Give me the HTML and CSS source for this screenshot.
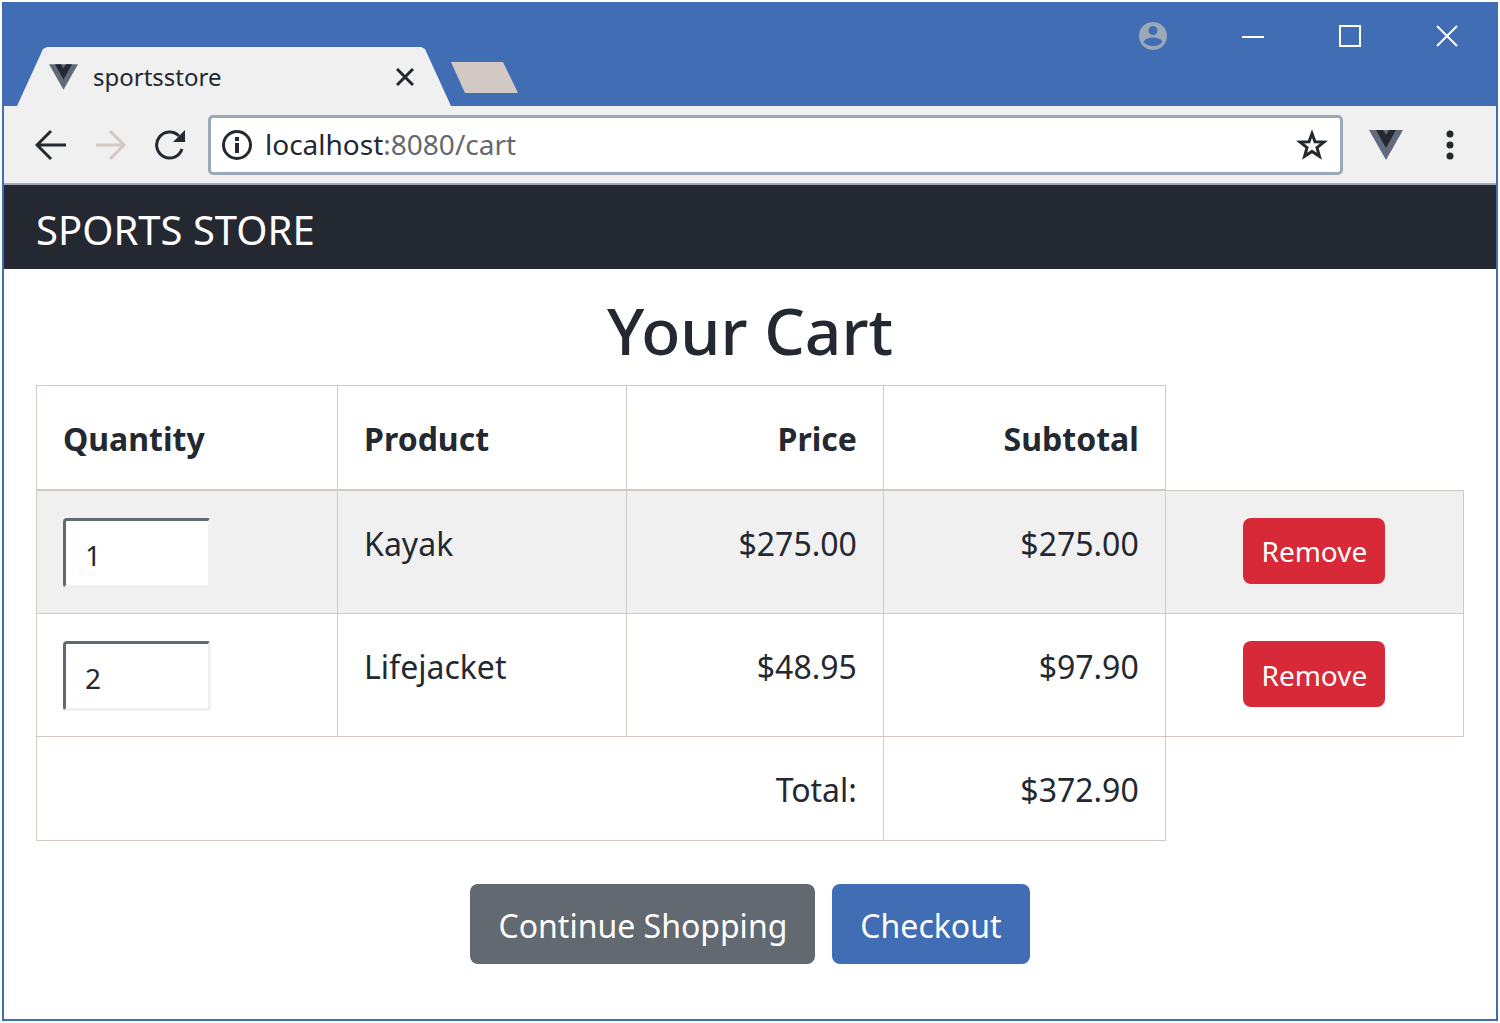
FILE: index.html
```html
<!DOCTYPE html>
<html lang="en">
<head>
<meta charset="utf-8">
<title>sportsstore</title>
<link rel="stylesheet" href="styles.css">
</head>
<body>
<div class="window">
  <header class="titlebar">
    <div class="tab">
      <svg class="tab-logo" viewBox="0 0 34 30" aria-hidden="true"><path fill="#5f6b7c" d="M0 0h34L17 30z"/><path fill="#242830" d="M7 0h7l3 5 3-5h7L17 18z"/></svg>
      <span class="tab-title">sportsstore</span>
      <button class="icon-button tab-close" aria-label="Close tab">
        <svg width="18" height="18" viewBox="0 0 18 18"><path d="M1 1l16 16M17 1L1 17" stroke="#242830" stroke-width="3" fill="none"/></svg>
      </button>
    </div>
    <button class="new-tab" aria-label="New tab"></button>
    <div class="window-controls">
      <button class="icon-button" aria-label="Profile">
        <svg width="30" height="30" viewBox="0 0 30 30"><path fill="#9aa8b8" fill-rule="evenodd" d="M15 1a14 14 0 1 0 0 28a14 14 0 1 0 0-28zM15 5a4.500 4.500 0 1 1 0 9a4.500 4.500 0 1 1 0-9zM5.500 20.500C8 17.500 11 16.500 15 16.500s7 1 9.500 4C22 24 19 25 15 25s-7-1-9.500-4.500z"/></svg>
      </button>
      <button class="icon-button" aria-label="Minimize">
        <svg width="24" height="24" viewBox="0 0 24 24"><path d="M1 13h22" stroke="#fff" stroke-width="2"/></svg>
      </button>
      <button class="icon-button" aria-label="Maximize">
        <svg width="24" height="24" viewBox="0 0 24 24"><path d="M2 2h20v20H2z" stroke="#fff" stroke-width="2" fill="none"/></svg>
      </button>
      <button class="icon-button" aria-label="Close">
        <svg width="24" height="24" viewBox="0 0 24 24"><path d="M2 2l20 20M22 2L2 22" stroke="#fff" stroke-width="2" fill="none"/></svg>
      </button>
    </div>
  </header>
  <div class="toolbar">
    <button class="icon-button" aria-label="Back">
      <svg width="32" height="32" viewBox="0 0 32 32"><path d="M31 16H3M16 2L2 16l14 14" stroke="#242830" stroke-width="3" fill="none"/></svg>
    </button>
    <button class="icon-button forward" aria-label="Forward">
      <svg width="32" height="32" viewBox="0 0 32 32"><path d="M1 16h27M15 2l14 14-14 14" stroke="#d2c8c4" stroke-width="3" fill="none"/></svg>
    </button>
    <button class="icon-button reload" aria-label="Reload">
      <svg width="32" height="32" viewBox="0 0 32 32"><path d="M28 20A13 13 0 1 1 25 7" stroke="#242830" stroke-width="3" fill="none"/><path fill="#242830" d="M31 1v12H19z"/></svg>
    </button>
    <div class="address">
      <svg width="32" height="32" viewBox="0 0 32 32" aria-hidden="true"><circle cx="16" cy="16" r="13.500" stroke="#242830" stroke-width="3" fill="none"/><path fill="#242830" d="M14 8h4v4h-4zM14 14h4v10h-4z"/></svg>
      <span class="url"><span class="host">localhost</span>:8080/cart</span>
      <button class="icon-button" aria-label="Bookmark">
        <svg width="32" height="32" viewBox="0 0 32 32"><path d="M16 4.500l3 8.200 9 .4-7 5.500 2.400 8.700L16 22.400l-7.400 4.900L11 18.600l-7-5.500 9-.4z" stroke="#242830" stroke-width="3" fill="none"/></svg>
      </button>
    </div>
    <button class="icon-button extension" aria-label="Vue devtools">
      <svg width="34" height="30" viewBox="0 0 34 30"><path fill="#5f6b7c" d="M0 0h34L17 30z"/><path fill="#242830" d="M7 0h7l3 5 3-5h7L17 18z"/></svg>
    </button>
    <button class="icon-button" aria-label="Menu">
      <svg width="8" height="30" viewBox="0 0 8 30"><g fill="#242830"><circle cx="4" cy="4" r="3.500"/><circle cx="4" cy="15" r="3.500"/><circle cx="4" cy="26" r="3.500"/></g></svg>
    </button>
  </div>
  <nav class="navbar"><a class="brand" href="#">SPORTS STORE</a></nav>
  <main class="content">
    <h1 class="heading">Your Cart</h1>
    <table class="cart">
      <colgroup><col class="col-quantity"><col class="col-product"><col class="col-price"><col class="col-subtotal"><col></colgroup>
      <thead>
        <tr><th>Quantity</th><th>Product</th><th class="number">Price</th><th class="number">Subtotal</th></tr>
      </thead>
      <tbody>
        <tr class="striped">
          <td><input class="quantity" type="text" value="1" aria-label="Kayak quantity"></td>
          <td>Kayak</td><td class="number">$275.00</td><td class="number">$275.00</td>
          <td class="action"><button class="button remove">Remove</button></td>
        </tr>
        <tr>
          <td><input class="quantity" type="text" value="2" aria-label="Lifejacket quantity"></td>
          <td>Lifejacket</td><td class="number">$48.95</td><td class="number">$97.90</td>
          <td class="action"><button class="button remove">Remove</button></td>
        </tr>
      </tbody>
      <tfoot>
        <tr><td class="number" colspan="3">Total:</td><td class="number">$372.90</td></tr>
      </tfoot>
    </table>
    <div class="actions">
      <button class="button secondary">Continue Shopping</button>
      <button class="button primary">Checkout</button>
    </div>
  </main>
</div>
</body>
</html>
```
FILE: styles.css
```css
* { box-sizing: border-box; }

body {
  margin: 0;
  padding: 2px;
  background: #fff;
  color: #242830;
  font: 32px/51px "Noto Sans", "Open Sans", sans-serif;
}

button, input { font: inherit; color: inherit; }

.window {
  min-height: calc(100vh - 4px);
  border: 2px solid #416db4;
  background: #fff;
}

.icon-button {
  display: flex;
  padding: 0;
  border: 0;
  background: none;
}

.titlebar {
  display: flex;
  align-items: flex-end;
  height: 102px;
  padding-left: 13px;
  background: #416db4;
}

.tab {
  display: flex;
  align-items: center;
  width: 434px;
  height: 59px;
  padding: 0 37px 0 32px;
  background: #f0f0f0;
  clip-path: polygon(0 100%, 26px 2px, 30px 0, 404px 0, 408px 2px, 100% 100%);
}

.tab-logo { width: 29px; height: 26px; }

.tab-title {
  flex: 1;
  padding-left: 15px;
  font-size: 24px;
}

.new-tab {
  width: 67px;
  height: 31px;
  margin-bottom: 13px;
  padding: 0;
  border: 0;
  background: #d2c8c4;
  clip-path: polygon(0 0, 52px 0, 100% 100%, 14px 100%);
}

.window-controls {
  display: flex;
  align-items: center;
  align-self: flex-start;
  gap: 73px;
  margin-left: auto;
  padding: 17px 37px 0 0;
}

.toolbar {
  display: flex;
  align-items: center;
  height: 79px;
  padding: 0 42px 0 31px;
  border-bottom: 2px solid #9aa8b8;
  background: #f0f0f0;
}

.forward { margin-left: 28px; }
.reload { margin-left: 27px; }

.address {
  display: flex;
  flex: 1;
  align-items: center;
  height: 60px;
  margin-left: 22px;
  padding: 0 12px 0 10px;
  border: 3px solid #9aa8b8;
  border-radius: 5px;
  background: #fff;
}

.url {
  flex: 1;
  padding-left: 12px;
  color: #626970;
  font-size: 28px;
}

.host { color: #242830; }

.extension { margin: 0 43px 0 26px; }

.navbar {
  padding: 19px 32px 14px;
  background: #242830;
}

.brand {
  display: block;
  color: #fff;
  font-size: 40px;
  text-decoration: none;
}

.content { padding: 24px 32px 48px; }

.heading {
  margin: 0 0 16px;
  font-size: 64px;
  font-weight: 500;
  line-height: 76px;
  text-align: center;
}

.cart {
  width: 100%;
  border-collapse: collapse;
  table-layout: fixed;
}

.col-quantity { width: 21.1%; }
.col-product { width: 20.25%; }
.col-price { width: 18%; }
.col-subtotal { width: 19.75%; }

.cart th, .cart td {
  padding: 27px 26px 25px;
  border: 1px solid #d2c8c4;
  text-align: left;
  vertical-align: top;
}

.cart thead th { border-bottom-width: 2px; }
.cart .number { text-align: right; }
.cart .action { text-align: center; }
.striped { background: #f0f0f0; }

.quantity {
  display: block;
  width: 148px;
  height: 70px;
  padding: 4px 19px 0;
  border: 3px solid #f0f0f0;
  border-top-color: #626970;
  border-left-color: #626970;
  border-radius: 4px;
  background: #fff;
  font-size: 28px;
}

.button {
  border: 0;
  border-radius: 8px;
  color: #fff;
}

.remove {
  display: block;
  height: 66px;
  margin: 0 auto;
  padding: 2px 18px 0;
  background: #d72937;
  font-size: 28px;
}

.actions {
  display: flex;
  justify-content: center;
  gap: 17px;
  padding-top: 43px;
}

.secondary, .primary {
  height: 80px;
  padding: 2px 28px 0;
}

.secondary { background: #626970; }
.primary { background: #416db4; }
```
